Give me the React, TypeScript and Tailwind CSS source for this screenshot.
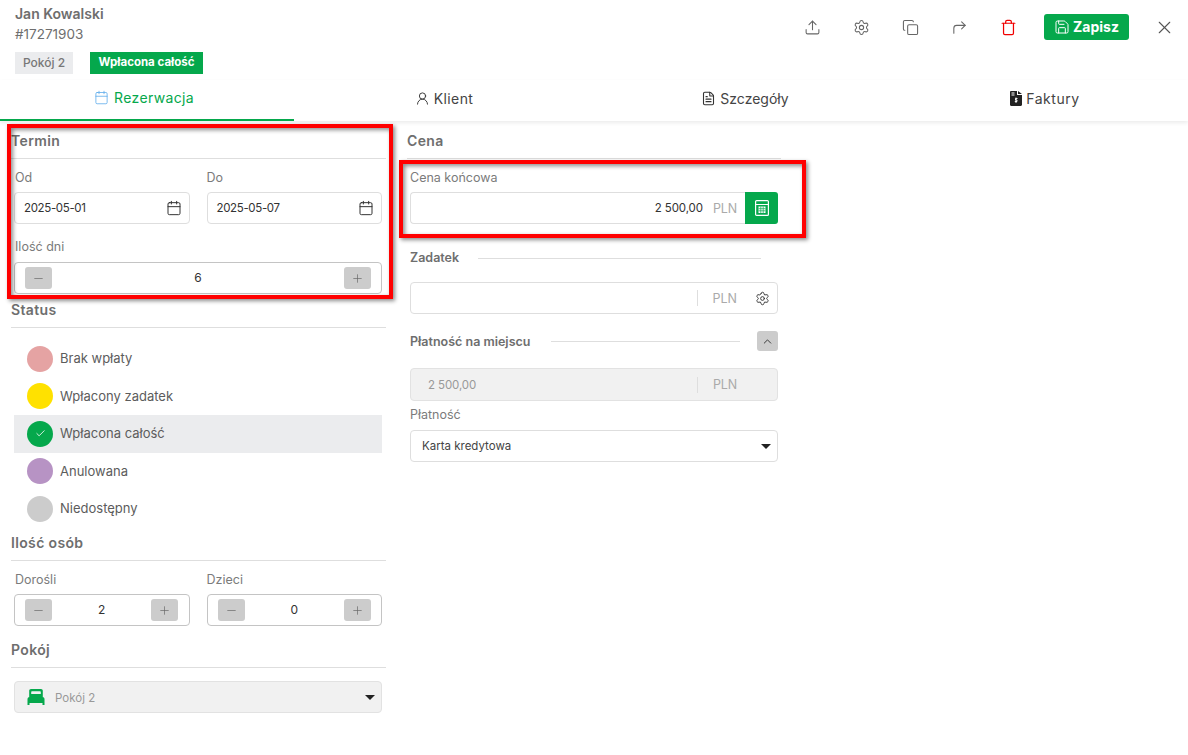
import React from "react";
import { Upload, Settings, Copy, CornerUpRight, Trash, Save, X, Calendar, UserRound, FileText, Check, ChevronUp, Minus, Plus } from "lucide-react";

const Heading = ({ children, className = "" }: { children: React.ReactNode; className?: string }) => (
  <div className={`flex h-[35px] items-center border-b border-[#dedede] pb-[2px] text-[14px] font-semibold tracking-[0.025em] text-[#6e6e6e] ${className}`}>{children}</div>
);

const Label = ({ children, className = "" }: { children: React.ReactNode; className?: string }) => (
  <div className={`flex h-[18px] items-center text-[12.5px] text-[#7b7b7b] ${className}`}>{children}</div>
);

const DateInput = ({ value }: { value: string }) => (
  <div className="flex h-[32px] items-center justify-between rounded-[4px] border border-[#dedede] pl-[9px] pr-[7px] text-[11.5px] tracking-[-0.03em] text-[#333]">
    <span className="pt-[2px]">{value}</span>
    <Calendar size={16} strokeWidth={1.5} className="text-[#333]" />
  </div>
);

const Stepper = ({ value }: { value: string }) => (
  <div className="flex h-[32px] items-center justify-between rounded-[4px] border border-[#c4c4c4] px-[10px] text-[12px] text-[#333]">
    <div className="flex h-[22px] w-[27px] items-center justify-center rounded-[3px] bg-[#cccccc]"><Minus size={13} strokeWidth={1.25} className="text-[#666]" /></div>
    {value}
    <div className="flex h-[22px] w-[27px] items-center justify-center rounded-[3px] bg-[#cccccc]"><Plus size={13} strokeWidth={1.25} className="text-[#666]" /></div>
  </div>
);

const StatusRow = ({ color, label, active }: { color: string; label: string; active?: boolean }) => (
  <div className={`flex h-[37.5px] items-center gap-[7px] pl-[13px] text-[13px] text-[#5c5c5c] ${active ? "bg-[#ebecee]" : ""}`}>
    <div className={`flex h-[26px] w-[26px] items-center justify-center rounded-full ${color}`}>
      {active && <Check size={11} strokeWidth={1.75} className="text-white" />}
    </div>
    {label}
  </div>
);

const Caret = () => (
  <svg width="10" height="5" viewBox="0 0 10 5"><path d="M0 0h10L5 5z" fill="#222" /></svg>
);

const InvoiceIcon = () => (
  <svg width="12" height="15" viewBox="0 0 12 15">
    <path d="M0 1.2C0 .5.5 0 1.2 0H7v4h5v9.8c0 .7-.5 1.2-1.2 1.2H1.2C.5 15 0 14.500 0 13.800z M8 0l4 3H8z" fill="#222" />
    <rect x="1.500" y="1.500" width="3" height="1" fill="#fff" />
    <rect x="1.500" y="3.500" width="3" height="1" fill="#fff" />
    <path d="M7.500 7.500H5.500v1.500h1.500v1.500H4.800M6 6.500v5.500" stroke="#fff" strokeWidth="0.9" fill="none" />
  </svg>
);

const CalcIcon = () => (
  <svg width="14" height="16" viewBox="0 0 14 16">
    <rect x=".6" y=".6" width="12.800" height="14.800" rx="1" fill="none" stroke="#fff" strokeWidth="1.200" />
    <path d="M1 4.500h12" stroke="#fff" strokeWidth="1" />
    <rect x="3.500" y="6.500" width="7" height="6.500" fill="#fff" />
    <path d="M5.800 6.500v6.500M8.200 6.500v6.500M3.500 8.700h7M3.500 10.800h7" stroke="#05a84c" strokeWidth=".7" />
  </svg>
);

const BedIcon = () => (
  <svg width="18" height="16" viewBox="0 0 18 16">
    <path d="M4 0h10c1 0 1.800.8 1.800 1.800V8h-2V3.200c0-.6-.4-1-1-1H5.200c-.6 0-1 .4-1 1V8h-2V1.800C2.200.8 3 0 4 0z" fill="#05a84c" />
    <path d="M4 5h10v3H4z" fill="#05a84c" />
    <path d="M2.500 8h13c1 0 2 .9 2 2v4H.5v-4c0-1.100 1-2 2-2z" fill="#05a84c" />
    <path d="M.5 14h2v2h-2zM15.500 14h2v2h-2z" fill="#05a84c" />
  </svg>
);

const Tab = ({ icon, label, className = "" }: { icon: React.ReactNode; label: string; className?: string }) => (
  <div className={`flex h-full items-center justify-center gap-[4px] pb-[5px] text-[14px] ${className}`}>
    {icon}
    {label}
  </div>
);

export default function App() {
  return (
    <div className="relative h-[755px] w-[1188px] overflow-hidden bg-white" style={{ fontFamily: '"Inter", "Noto Sans", sans-serif' }}>
      {/* Header */}
      <div className="flex h-[80px] justify-between">
        <div className="pl-[15px] pt-[4px]">
          <div className="flex h-[18px] items-center text-[14px] font-semibold text-[#6e6e6e]">Jan Kowalski</div>
          <div className="mt-[3px] flex h-[18px] items-center text-[13.5px] text-[#6e6e6e]">#17271903</div>
          <div className="mt-[9px] flex gap-[17px]">
            <div className="flex h-[22px] w-[58px] items-center justify-center bg-[#ebecee] text-[12px] font-medium text-[#777]">Pokój 2</div>
            <div className="flex h-[22px] w-[113px] items-center justify-center bg-[#05a84c] text-[11.5px] font-bold text-white">Wpłacona całość</div>
          </div>
        </div>
        <div className="flex h-[54px] items-center pr-[13px]">
          <div className="flex items-center gap-[32px] text-[#666]">
            <Upload size={17} strokeWidth={1.5} />
            <Settings size={17} strokeWidth={1.5} />
            <Copy size={17} strokeWidth={1.5} />
            <CornerUpRight size={17} strokeWidth={1.5} />
            <Trash size={17} strokeWidth={1.75} className="text-[#f00000]" />
          </div>
          <div className="ml-[27px] flex h-[26px] w-[85px] items-center justify-center gap-[3px] rounded-[3px] bg-[#05a84c] pb-px text-[14px] font-bold text-white">
            <Save size={16} strokeWidth={1.5} />
            Zapisz
          </div>
          <X size={21} strokeWidth={1.25} className="ml-[25px] text-[#555]" />
        </div>
      </div>

      {/* Tabs */}
      <div className="flex h-[41px] text-[#444] shadow-[0_2px_4px_rgba(0,0,0,0.08)]">
        <Tab className="w-[294px] border-b-2 border-[#05a84c] pr-[6px] tracking-[0.025em] text-[#05a84c]" icon={<Calendar size={15} strokeWidth={1.25} className="mr-px text-[#5aa9ea]" />} label="Rezerwacja" />
        <Tab className="w-[300px] tracking-[0.03em]" icon={<UserRound size={15} strokeWidth={1.5} className="text-[#333]" />} label="Klient" />
        <Tab className="w-[302px]" icon={<FileText size={15} strokeWidth={1.75} className="text-[#333]" />} label="Szczegóły" />
        <Tab className="w-[292px] pl-[6px] tracking-[0.04em]" icon={<InvoiceIcon />} label="Faktury" />
      </div>

      {/* Body */}
      <div className="flex pt-[3px]">
        <div className="ml-[11px] w-[375px]">
          <Heading>Termin</Heading>
          <div className="pl-[3px] pr-[4px]">
            <div className="mt-[10px] grid grid-cols-2 gap-x-[17px]">
              <div><Label className="pl-px">Od</Label><div className="mt-[5px]"><DateInput value="2025-05-01" /></div></div>
              <div><Label>Do</Label><div className="mt-[5px]"><DateInput value="2025-05-07" /></div></div>
            </div>
            <Label className="mt-[14px] pl-px">Ilość dni</Label>
            <div className="mt-[6px]"><Stepper value="6" /></div>
          </div>

          <Heading className="-mt-[1px]">Status</Heading>
          <div className="mt-[12px] pl-[3px] pr-[4px]">
            <StatusRow color="bg-[#e5a3a3]" label="Brak wpłaty" />
            <StatusRow color="bg-[#ffe100]" label="Wpłacony zadatek" />
            <StatusRow color="bg-[#05a84c]" label="Wpłacona całość" active />
            <StatusRow color="bg-[#b793c4]" label="Anulowana" />
            <StatusRow color="bg-[#cccccc]" label="Niedostępny" />
          </div>

          <Heading className="-mt-[1.5px]">Ilość osób</Heading>
          <div className="mt-[10px] grid grid-cols-2 gap-x-[17px] pl-[3px] pr-[4px]">
            <div><Label className="pl-px">Dorośli</Label><div className="mt-[5px]"><Stepper value="2" /></div></div>
            <div><Label>Dzieci</Label><div className="mt-[5px]"><Stepper value="0" /></div></div>
          </div>

          <Heading className="mt-[7px]">Pokój</Heading>
          <div className="mt-[13px] pl-[3px] pr-[4px]">
            <div className="flex h-[32px] items-center justify-between rounded-[4px] border border-[#e2e2e2] bg-[#f1f1f1] pl-[12px] pr-[6px] text-[11.5px] text-[#999]">
              <div className="flex items-center gap-[10px]"><BedIcon /><span className="pt-[3px]">Pokój 2</span></div>
              <Caret />
            </div>
          </div>
        </div>

        <div className="ml-[21px] w-[374px]">
          <Heading>Cena</Heading>
          <div className="pl-[3px] pr-[3px]">
            <Label className="mt-[10px]">Cena końcowa</Label>
            <div className="mt-[5px] flex h-[32px]">
              <div className="flex flex-1 items-center justify-end rounded-l-[4px] border border-r-0 border-[#dedede] pr-[8px] pt-[2px] text-[11.5px] tracking-[-0.01em] text-[#333]">
                2 500,00
                <span className="ml-[10px] text-[12.5px] text-[#aaa]">PLN</span>
              </div>
              <div className="flex w-[33px] items-center justify-center rounded-r-[3px] bg-[#05a84c]"><CalcIcon /></div>
            </div>

            <div className="mt-[25px] flex h-[18px] items-center text-[12.5px] font-semibold text-[#6e6e6e]">
              <span className="w-[68px]">Zadatek</span>
              <div className="h-px w-[283px] bg-[#dedede]" />
            </div>
            <div className="mt-[15px] flex h-[32px] items-center justify-end rounded-[4px] border border-[#dedede] pr-[7px] text-[12.5px] text-[#aaa]">
              <div className="h-[16px] w-px bg-[#dedede]" />
              <span className="ml-[15px] pt-[2px]">PLN</span>
              <Settings size={15} strokeWidth={1.5} className="ml-[18px] text-[#333]" />
            </div>

            <div className="mt-[17px] flex h-[20px] items-center text-[12.5px] font-semibold text-[#6e6e6e]">
              <span className="w-[141px] whitespace-nowrap pt-[2px]">Płatność na miejscu</span>
              <div className="h-px w-[189px] bg-[#dedede]" />
              <div className="ml-[17px] flex h-[20px] w-[21px] items-center justify-center rounded-[3px] bg-[#cccccc]"><ChevronUp size={13} strokeWidth={1.75} className="text-[#333]" /></div>
            </div>
            <div className="mt-[17px] flex h-[33px] items-center rounded-[4px] border border-[#e2e2e2] bg-[#f1f1f1] pl-[17px] pr-[40px] text-[11.5px] tracking-[-0.01em] text-[#999]">
              <span className="pt-[2px]">2 500,00</span>
              <div className="ml-auto h-[16px] w-px bg-[#dedede]" />
              <span className="ml-[15px] pt-[2px] text-[12.5px] text-[#aaa]">PLN</span>
            </div>
            <Label className="mt-[5px]">Płatność</Label>
            <div className="mt-[6px] flex h-[32px] items-center justify-between rounded-[4px] border border-[#dedede] pl-[11px] pr-[6px] text-[11.5px] text-[#444]">
              <span className="pt-[2px]">Karta kredytowa</span>
              <Caret />
            </div>
          </div>
        </div>
      </div>

      {/* Annotation boxes drawn over the form */}
      <div className="pointer-events-none absolute left-[7px] top-[124px] h-[175px] w-[386px] border-[4px] border-[#ff0000] shadow-[2px_2px_4px_rgba(0,0,0,0.45),inset_2px_2px_4px_rgba(0,0,0,0.45)]" />
      <div className="pointer-events-none absolute left-[399px] top-[160px] h-[78px] w-[407px] border-[4px] border-[#ff0000] shadow-[2px_2px_4px_rgba(0,0,0,0.45),inset_2px_2px_4px_rgba(0,0,0,0.45)]" />
    </div>
  );
}
